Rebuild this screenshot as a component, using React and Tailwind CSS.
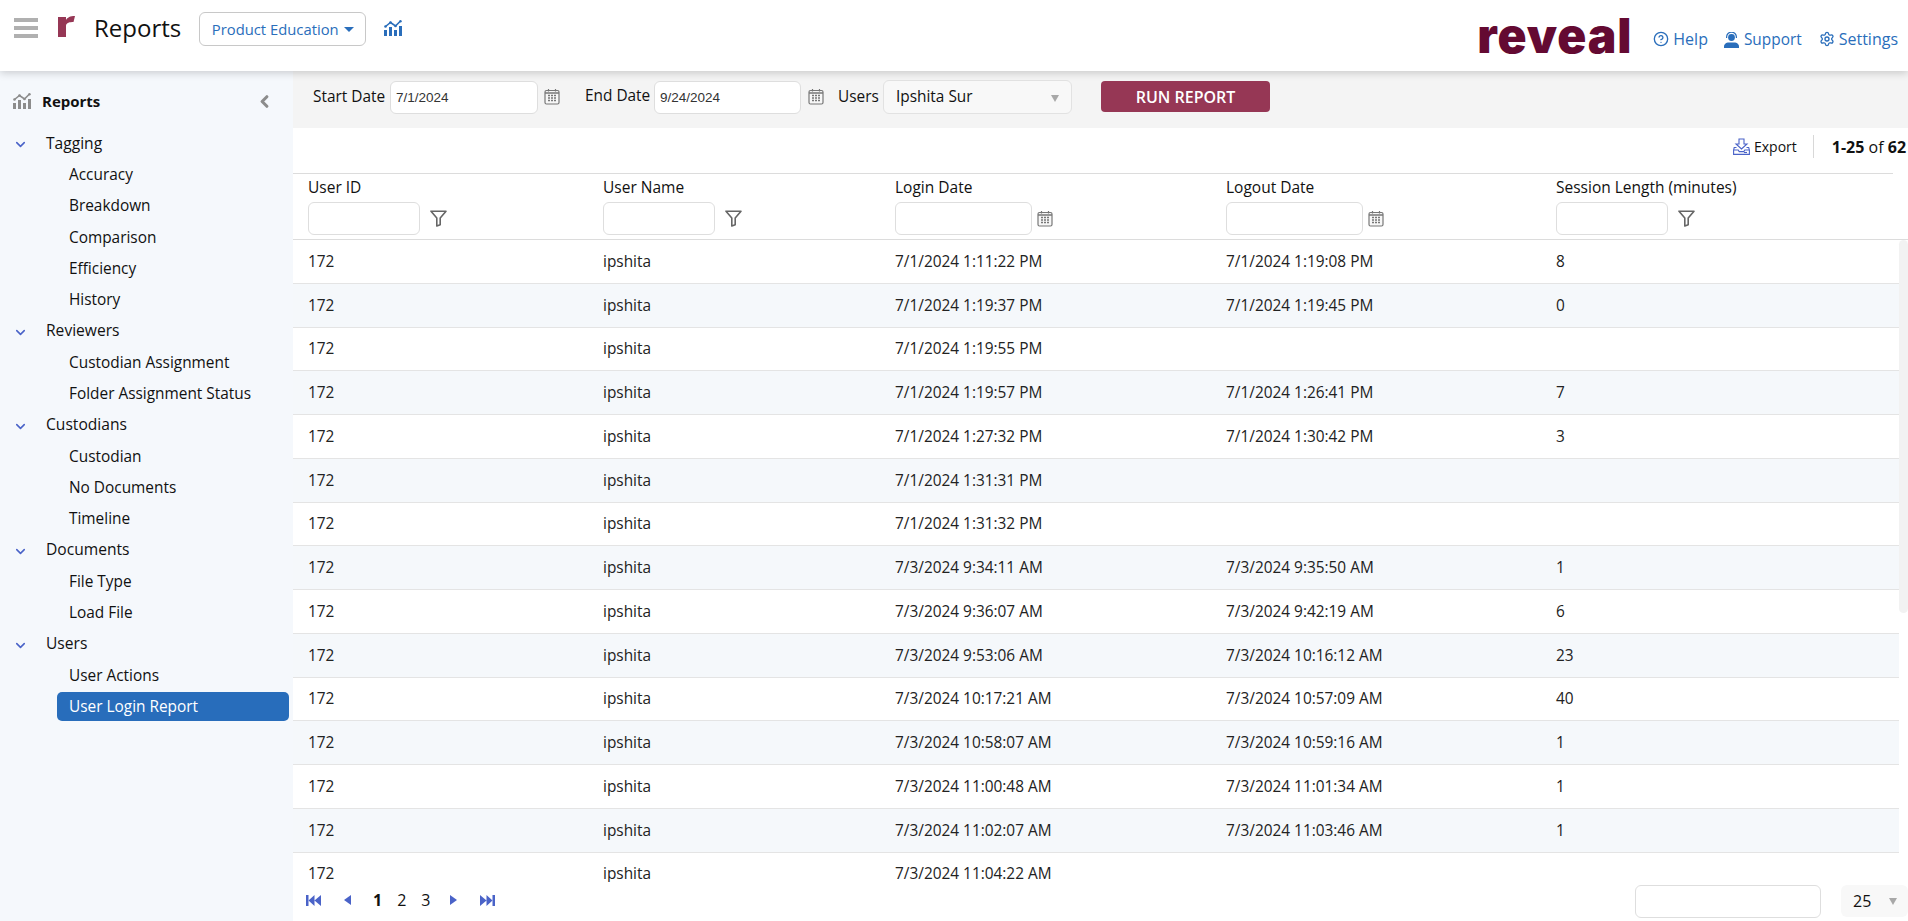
import React from "react";
import {
  ChevronDown,
  ChevronLeft,
  CircleHelp,
  Settings,
} from "lucide-react";

const FONT = "font-['Open_Sans','Noto_Sans',sans-serif]";

const menu = [
  { label: "Tagging", items: ["Accuracy", "Breakdown", "Comparison", "Efficiency", "History"] },
  { label: "Reviewers", items: ["Custodian Assignment", "Folder Assignment Status"] },
  { label: "Custodians", items: ["Custodian", "No Documents", "Timeline"] },
  { label: "Documents", items: ["File Type", "Load File"] },
  { label: "Users", items: ["User Actions", "User Login Report"] },
];

const rows = [
  ["7/1/2024 1:11:22 PM", "7/1/2024 1:19:08 PM", "8"],
  ["7/1/2024 1:19:37 PM", "7/1/2024 1:19:45 PM", "0"],
  ["7/1/2024 1:19:55 PM", "", ""],
  ["7/1/2024 1:19:57 PM", "7/1/2024 1:26:41 PM", "7"],
  ["7/1/2024 1:27:32 PM", "7/1/2024 1:30:42 PM", "3"],
  ["7/1/2024 1:31:31 PM", "", ""],
  ["7/1/2024 1:31:32 PM", "", ""],
  ["7/3/2024 9:34:11 AM", "7/3/2024 9:35:50 AM", "1"],
  ["7/3/2024 9:36:07 AM", "7/3/2024 9:42:19 AM", "6"],
  ["7/3/2024 9:53:06 AM", "7/3/2024 10:16:12 AM", "23"],
  ["7/3/2024 10:17:21 AM", "7/3/2024 10:57:09 AM", "40"],
  ["7/3/2024 10:58:07 AM", "7/3/2024 10:59:16 AM", "1"],
  ["7/3/2024 11:00:48 AM", "7/3/2024 11:01:34 AM", "1"],
  ["7/3/2024 11:02:07 AM", "7/3/2024 11:03:46 AM", "1"],
  ["7/3/2024 11:04:22 AM", "", ""],
];

const COLS = "grid grid-cols-[295px_292px_331px_330px_1fr]";

const ChartIcon = ({ className }) => (
  <svg viewBox="0 0 18 16" className={className} fill="currentColor">
    <rect x="0" y="10" width="3" height="6" />
    <rect x="5" y="7" width="3" height="9" />
    <rect x="10" y="10" width="3" height="6" />
    <rect x="15" y="6" width="3" height="10" />
    <path d="M1.5 6.5 6.5 2.5 11.5 6 16.5 1" fill="none" stroke="currentColor" strokeWidth="1.6" />
    <circle cx="1.5" cy="6.5" r="1.3" />
    <circle cx="6.5" cy="2.5" r="1.3" />
    <circle cx="11.5" cy="6" r="1.3" />
    <circle cx="16.5" cy="1.2" r="1.2" />
  </svg>
);

const CalendarIcon = () => (
  <svg viewBox="0 0 16 17" className="block w-[16px] h-[17px] shrink-0 text-[#777]" fill="none">
    <rect x="1" y="2.5" width="14" height="13.5" rx="1.5" fill="#f7f7f7" stroke="currentColor" strokeWidth="1.2" />
    <path d="M1 5h14" stroke="currentColor" strokeWidth="1.5" />
    <path d="M4.5 1v2.5M11.5 1v2.5" stroke="currentColor" strokeWidth="1.2" />
    <path
      d="M4 7.5h2M7 7.5h2M10 7.5h2M4 10h2M7 10h2M10 10h2M4 12.5h2M7 12.5h2M10 12.5h2"
      stroke="currentColor"
      strokeWidth="1.5"
    />
  </svg>
);

const FilterIcon = () => (
  <svg viewBox="0 0 17 17" className="w-[17px] h-[17px] shrink-0" fill="none">
    <path
      d="M1 1.2h15L10.200 8v6.800L6.800 16V8z"
      stroke="#666"
      strokeWidth="1.6"
      strokeLinejoin="round"
    />
  </svg>
);

const SupportIcon = () => (
  <svg viewBox="0 0 15 16" className="w-[15px] h-[16px]" fill="#2a6ebb">
    <circle cx="7.5" cy="5.5" r="3.4" />
    <path d="M2.6 6V5a4.9 4.9 0 0 1 9.8 0v1" fill="none" stroke="#2a6ebb" strokeWidth="1.2" />
    <path d="M0 16v-1.5C0 12 2.5 10.5 4.5 10.5h6c2 0 4.5 1.5 4.5 4V16z" />
  </svg>
);

const ExportIcon = () => (
  <svg viewBox="0 0 17 17" className="w-[17px] h-[17px]" fill="none" stroke="#4a63c8" strokeWidth="1.1">
    <path d="M6 1h5v5h3l-5.500 5L3 6h3z" />
    <path d="M3.500 9.500H1.200L.6 12v4.400h15.800V12l-.7-2.500h-2.200M.6 12h4.600l1 1.600h4.600l1-1.600h4.600" />
    <path d="M11 14.500h3" />
  </svg>
);

const SmallCaret = () => (
  <span className="block w-0 h-0 border-x-[4.5px] border-x-transparent border-t-[7px] border-t-[#a8a8a8]" />
);

const Triangle = ({ dir }) =>
  dir === "left" ? (
    <span className="block w-0 h-0 border-y-[5px] border-y-transparent border-r-[7px] border-r-[#4a63c8]" />
  ) : (
    <span className="block w-0 h-0 border-y-[5px] border-y-transparent border-l-[7px] border-l-[#4a63c8]" />
  );

const SkipIcon = ({ flip }) => (
  <svg viewBox="0 0 15 11" className={`block w-[15px] h-[11px] ${flip ? "rotate-180" : ""}`} fill="#4a63c8">
    <rect x="0" y="0" width="2.5" height="11" />
    <path d="M2.500 5.500 8.500 0v11zM8.500 5.500 15 0v11z" />
  </svg>
);

const TextBox = ({ className, ...props }) => (
  <input
    readOnly
    className={`h-[33px] border border-[#dedede] rounded-[6px] bg-white outline-none ${className}`}
    {...props}
  />
);

const HeaderCell = ({ title, inputWidth, icon }) => (
  <div className="pl-[15px] pt-[1px]">
    <div className="text-[15.5px] leading-[24px] h-[27px] text-[#111] whitespace-nowrap">{title}</div>
    <div className="flex items-center gap-[10px]">
      <TextBox className={inputWidth} />
      {icon}
    </div>
  </div>
);

export default function App() {
  return (
    <div className={`${FONT} h-[921px] w-full overflow-hidden flex flex-col bg-white text-[#111]`}>
      {/* top bar */}
      <header className="h-[71px] shrink-0 relative z-10 bg-white shadow-[0_2px_8px_rgba(0,0,0,0.18)] flex items-start">
        <div className="flex flex-col gap-[4px] ml-[14px] mt-[18px] w-[24px]">
          <span className="h-[4px] bg-[#b0b0b0]" />
          <span className="h-[4px] bg-[#b0b0b0]" />
          <span className="h-[4px] bg-[#b0b0b0]" />
        </div>
        <svg viewBox="0 0 17 21" className="w-[17px] h-[21px] ml-[20px] mt-[16px]" fill="#963755">
          <path d="M0 1h8v3C9.500 1.500 12 0 17 0l-1.500 6C12 6 8 6.500 8 10v11H0z" />
        </svg>
        <span className="ml-[19px] mt-[12px] text-[24px] leading-[32px] text-[#111]">Reports</span>
        <button className="ml-[18px] mt-[12px] w-[167px] h-[34px] border border-[#c8c8c8] rounded-[6px] flex items-center justify-center gap-[5px] text-[14.8px] text-[#2a6ebb]">
          Product Education
          <span className="w-0 h-0 border-x-[5px] border-x-transparent border-t-[5px] border-t-[#2a6ebb]" />
        </button>
        <ChartIcon className="w-[18px] h-[16px] ml-[18px] mt-[20px] text-[#2a6ebb]" />
        <div className="ml-auto flex items-start mr-[10px]">
          <span className="font-['Inter',sans-serif] font-black text-[48px] leading-[48px] mt-[12px] tracking-[0.9px] text-[#640a32]">
            reveal
          </span>
          <a className="ml-[21px] mt-[28px] flex items-center gap-[4px] text-[16px] leading-[22px] text-[#2a6ebb]">
            <CircleHelp size={16} strokeWidth={2} />
            Help
          </a>
          <a className="ml-[16px] mt-[28px] flex items-center gap-[5px] text-[15.4px] leading-[22px] text-[#2a6ebb]">
            <SupportIcon />
            <span className="mt-[1px]">Support</span>
          </a>
          <a className="ml-[17px] mt-[28px] flex items-center gap-[4px] text-[16px] leading-[22px] text-[#2a6ebb]">
            <Settings size={16} strokeWidth={2} />
            Settings
          </a>
        </div>
      </header>

      <div className="flex-1 flex min-h-0">
        {/* sidebar */}
        <aside className="w-[293px] shrink-0 bg-[#f5f8fc] pt-[20px]">
          <div className="flex items-center h-[20px] pl-[13px] pr-[19px]">
            <ChartIcon className="w-[18px] h-[16px] text-[#8c8c8c]" />
            <span className="ml-[11px] text-[15px] font-bold text-[#111]">Reports</span>
            <ChevronLeft size={19} strokeWidth={4} className="ml-auto text-[#8c8c8c]" />
          </div>
          <div className="mt-[16.6px]">
            {menu.map((group) => (
              <div key={group.label}>
                <div className="h-[31.3px] flex items-center pl-[13px] text-[15.6px]">
                  <ChevronDown size={15} strokeWidth={2.5} className="text-[#4a63c8] mt-[3px]" />
                  <span className="ml-[18px]">{group.label}</span>
                </div>
                {group.items.map((item) =>
                  item === "User Login Report" ? (
                    <div
                      key={item}
                      className="ml-[57px] mr-[4px] h-[29px] mt-[1.2px] flex items-center pl-[12px] rounded-[5px] bg-[#286dbb] text-white text-[15.4px]"
                    >
                      {item}
                    </div>
                  ) : (
                    <div key={item} className="h-[31.3px] flex items-center pl-[69px] text-[15.4px]">
                      {item}
                    </div>
                  )
                )}
              </div>
            ))}
          </div>
        </aside>

        {/* report area */}
        <main className="flex-1 min-w-0 flex flex-col">
          <div className="h-[57px] shrink-0 bg-[#f4f4f4] flex items-start pl-[20px] text-[15.4px] whitespace-nowrap">
            <span className="mt-[16px] leading-[20px] w-[73px]">Start Date</span>
            <TextBox
              defaultValue="7/1/2024"
              className="ml-[4px] mt-[10px] w-[148px] h-[30px] px-[5px] text-[13.5px] font-['Liberation_Sans',sans-serif] text-[#333]"
            />
            <span className="ml-[6px] mt-[17px]">
              <CalendarIcon />
            </span>
            <span className="ml-[25px] mt-[15px] leading-[20px] w-[66px]">End Date</span>
            <TextBox
              defaultValue="9/24/2024"
              className="ml-[3px] mt-[10px] w-[147px] h-[30px] px-[5px] text-[13.5px] font-['Liberation_Sans',sans-serif] text-[#333]"
            />
            <span className="ml-[7px] mt-[17px]">
              <CalendarIcon />
            </span>
            <span className="ml-[14px] mt-[16px] leading-[20px] w-[40px]">Users</span>
            <div className="ml-[5px] mt-[9px] w-[189px] h-[34px] border border-[#e2e2e2] rounded-[6px] bg-[#f8f8f8] flex items-center pl-[12px] pr-[12px]">
              <span>Ipshita Sur</span>
              <span className="ml-auto mt-[2px]">
                <SmallCaret />
              </span>
            </div>
            <button className="ml-[29px] mt-[10px] w-[169px] h-[31px] rounded-[4px] bg-[#963755] text-white text-[16px] font-semibold">
              RUN REPORT
            </button>
          </div>

          <div className="h-[45px] shrink-0 flex items-center text-[14px] whitespace-nowrap pl-[1440px] pb-[8px]">
            <ExportIcon />
            <span className="ml-[4px]">Export</span>
            <span className="ml-[16px] w-px h-[23px] bg-[#d8d8d8]" />
            <span className="ml-[18px] text-[16px]">
              <b className="font-bold">1-25</b> of <b className="font-bold">62</b>
            </span>
          </div>

          <div className="shrink-0 border-t border-[#dcdcdc] mr-[15px]" />
          <div className={`${COLS} shrink-0 h-[66px] border-b border-[#dcdcdc]`}>
            <HeaderCell title="User ID" inputWidth="w-[112px]" icon={<FilterIcon />} />
            <HeaderCell title="User Name" inputWidth="w-[112px]" icon={<FilterIcon />} />
            <div className="[&_div.flex]:gap-[5px]">
              <HeaderCell title="Login Date" inputWidth="w-[137px]" icon={<CalendarIcon />} />
            </div>
            <div className="[&_div.flex]:gap-[5px]">
              <HeaderCell title="Logout Date" inputWidth="w-[137px]" icon={<CalendarIcon />} />
            </div>
            <HeaderCell title="Session Length (minutes)" inputWidth="w-[112px]" icon={<FilterIcon />} />
          </div>

          <div className="flex-1 min-h-0 overflow-hidden relative pr-[9px]">
            {rows.map((row, i) => (
              <div
                key={row[0]}
                className={`${COLS} h-[43.75px] items-center border-b border-[#e4e4e4] text-[15.4px] text-[#222] ${
                  i % 2 === 1 ? "bg-[#f5f8fb]" : "bg-white"
                }`}
              >
                <span className="pl-[15px]">172</span>
                <span className="pl-[15px]">ipshita</span>
                <span className="pl-[15px]">{row[0]}</span>
                <span className="pl-[15px]">{row[1]}</span>
                <span className="pl-[15px]">{row[2]}</span>
              </div>
            ))}
            <div className="absolute top-0 right-0 w-[9px] h-[373px] bg-[#f2f2f2] rounded-[5px]" />
          </div>

          <div className="h-[39px] shrink-0 flex items-start text-[16px] relative">
            <div className="flex items-center h-[36px] pl-[13px]">
              <SkipIcon />
              <span className="ml-[23px]">
                <Triangle dir="left" />
              </span>
              <b className="ml-[22px] font-bold">1</b>
              <span className="ml-[15px]">2</span>
              <span className="ml-[15px]">3</span>
              <span className="ml-[20px]">
                <Triangle dir="right" />
              </span>
              <span className="ml-[23px]">
                <SkipIcon flip />
              </span>
            </div>
            <TextBox className="ml-auto mt-[3px] w-[186px] h-[31px]" />
            <div className="ml-[20px] mt-[3px] w-[67px] h-[32px] rounded-[6px] bg-[#f8f8f8] flex items-center pl-[12px] pr-[11px]">
              <span>25</span>
              <span className="ml-auto">
                <SmallCaret />
              </span>
            </div>
          </div>
        </main>
      </div>
    </div>
  );
}
